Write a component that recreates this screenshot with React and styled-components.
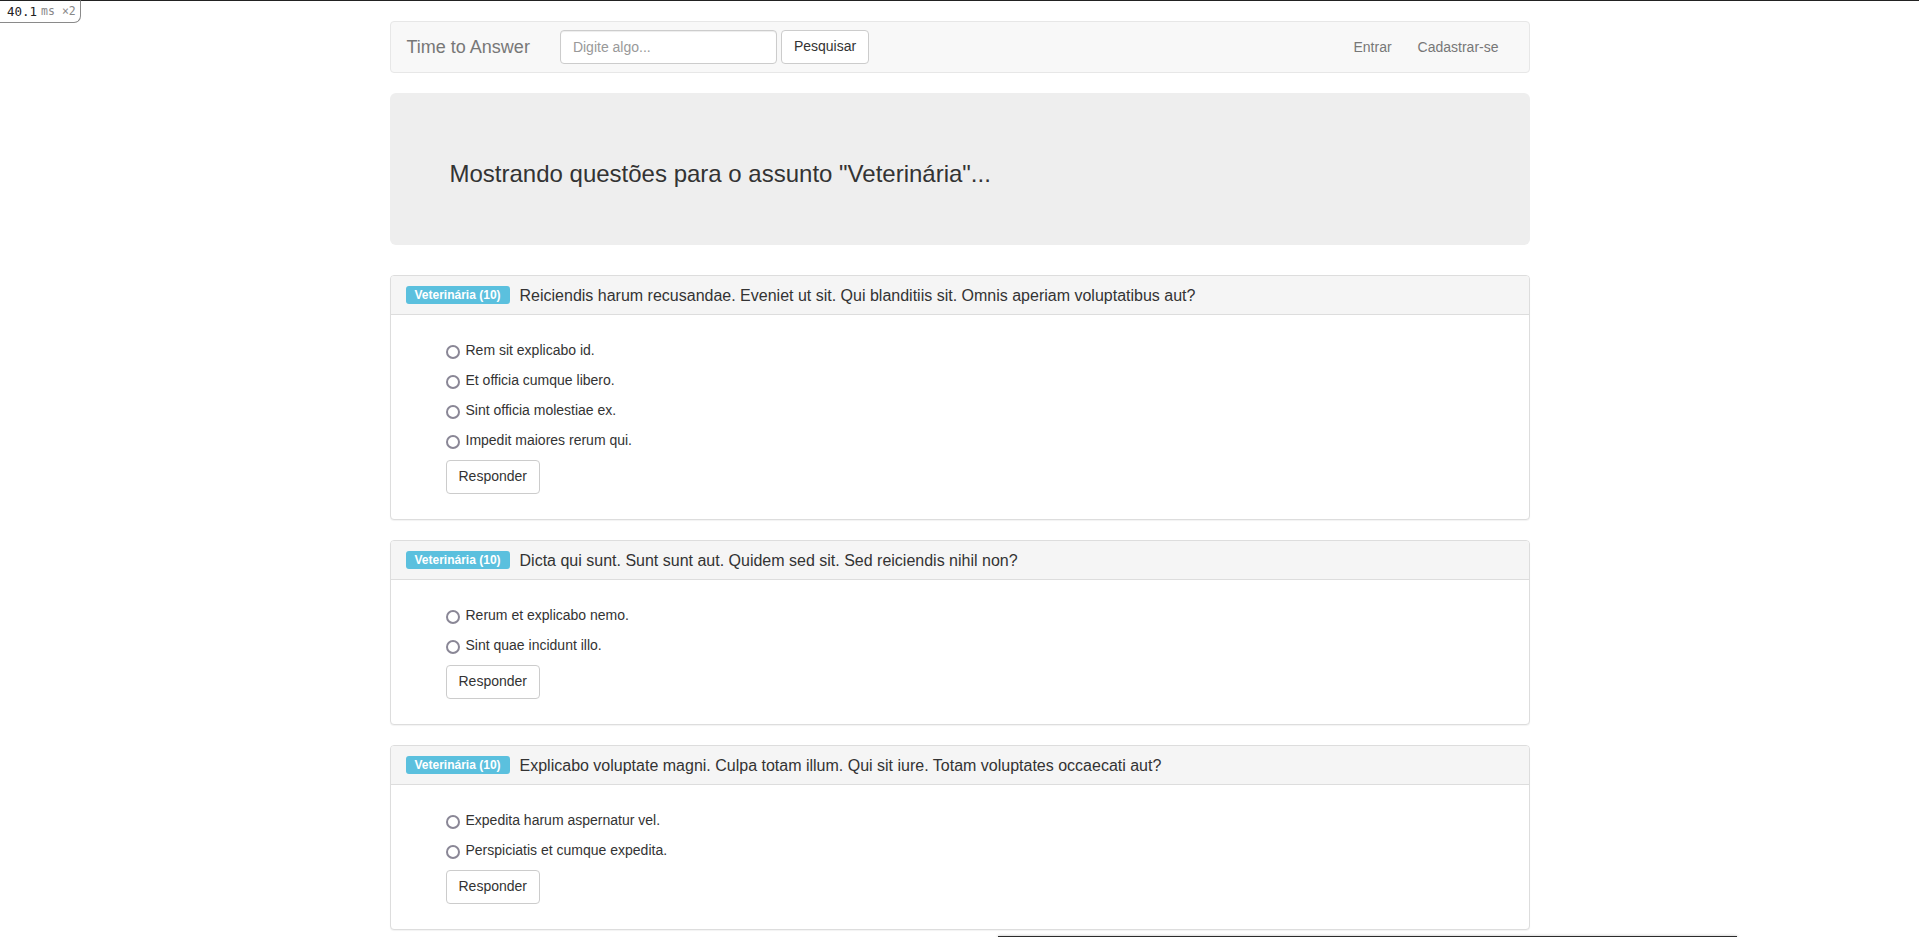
import styled, { createGlobalStyle } from "styled-components";

const GlobalStyle = createGlobalStyle`
  html, body {
    margin: 0;
    padding: 0;
    overflow: hidden;
    background: #fff;
  }
  body {
    font-family: "Liberation Sans", Arial, sans-serif;
    font-size: 14px;
    line-height: 1.42857;
    color: #333;
  }
  * {
    box-sizing: border-box;
  }
`;

const TopLine = styled.div`
  position: fixed;
  top: 0;
  left: 0;
  right: 0;
  height: 1px;
  background: #222;
  z-index: 10;
`;

const TimerBadge = styled.div`
  position: fixed;
  top: 0;
  left: -1px;
  width: 82px;
  height: 23px;
  padding: 0 0 0 7px;
  display: flex;
  align-items: center;
  gap: 4px;
  background: #fff;
  border: 1px solid #8a8a8a;
  border-top-color: #222;
  border-radius: 0 0 7px 0;
  font-family: "DejaVu Sans Mono", "Liberation Mono", monospace;
  font-size: 11.5px;
  color: #888;
  z-index: 11;
`;

const TimerValue = styled.span`
  color: #222;
  font-size: 12.5px;
`;

const BottomBar = styled.div`
  position: fixed;
  left: 998px;
  bottom: -40px;
  width: 739px;
  height: 41px;
  background: #2b2b2b;
  box-shadow: 0 0 3px rgba(0, 0, 0, 0.25);
`;

const Container = styled.div`
  width: 1140px;
  margin: 21px auto 0;
`;

const Navbar = styled.nav`
  display: flex;
  align-items: center;
  height: 52px;
  margin-bottom: 20px;
  background: #f8f8f8;
  border: 1px solid #e7e7e7;
  border-radius: 4px;
`;

const Brand = styled.a`
  padding: 0 15px 0 16px;
  font-size: 18px;
  line-height: 20px;
  color: #777;
  text-decoration: none;
`;

const SearchForm = styled.form`
  display: flex;
  align-items: center;
  gap: 4px;
  padding: 0 15px;
`;

const SearchInput = styled.input`
  width: 217px;
  height: 34px;
  padding: 6px 12px;
  font-family: inherit;
  font-size: 14px;
  color: #555;
  background: #fff;
  border: 1px solid #ccc;
  border-radius: 4px;
  box-shadow: inset 0 1px 1px rgba(0, 0, 0, 0.075);
  outline: none;

  &::placeholder {
    color: #999;
  }
`;

const Button = styled.button`
  height: 34px;
  padding: 6px 12px;
  font-family: inherit;
  font-size: 14px;
  line-height: 1.42857;
  color: #333;
  background: #fff;
  border: 1px solid #ccc;
  border-radius: 4px;
  cursor: pointer;
`;

const NavLinks = styled.ul`
  display: flex;
  margin: 0 0 0 auto;
  padding: 0 15px 0 0;
  list-style: none;
`;

const NavLink = styled.a`
  display: block;
  padding: 15px;
  padding-right: ${(props) => (props.$tight ? "11px" : "15px")};
  line-height: 20px;
  color: #777;
  text-decoration: none;
`;

const Jumbotron = styled.div`
  padding: 48px 60px;
  margin-bottom: 30px;
  background: #eee;
  border-radius: 6px;
`;

const JumboTitle = styled.h3`
  margin: 20px 0 10px;
  font-size: 24px;
  font-weight: 500;
  line-height: 1.1;
`;

const Panel = styled.div`
  margin-bottom: 20px;
  background: #fff;
  border: 1px solid #ddd;
  border-radius: 4px;
  box-shadow: 0 1px 1px rgba(0, 0, 0, 0.05);
`;

const PanelHeading = styled.div`
  display: flex;
  align-items: center;
  gap: 10px;
  padding: 10px 15px;
  background: #f5f5f5;
  border-bottom: 1px solid #ddd;
  border-radius: 3px 3px 0 0;
`;

const Label = styled.span`
  display: inline-block;
  padding: 2.4px 9px 3.6px;
  font-size: 12px;
  font-weight: 700;
  line-height: 1;
  color: #fff;
  background: #5bc0de;
  border-radius: 3px;
  white-space: nowrap;
`;

const PanelTitle = styled.h3`
  margin: 0;
  font-size: 16px;
  font-weight: 500;
  line-height: 1.1;
  color: #333;
`;

const PanelBody = styled.div`
  padding: 15px 15px 25px 55px;
`;

const OptionList = styled.ul`
  display: flex;
  flex-direction: column;
  gap: 10px;
  margin: 10px 0;
  padding: 0;
  list-style: none;
`;

const OptionLabel = styled.label`
  display: flex;
  align-items: flex-start;
  min-height: 20px;
  line-height: 20px;
  cursor: pointer;
`;

const Radio = styled.input`
  appearance: none;
  width: 14px;
  height: 14px;
  margin: 5px 6px 0 0;
  flex: none;
  background: #fff;
  border: 2px solid #8a8796;
  border-radius: 50%;

  &:checked {
    background: radial-gradient(circle, #337ab7 0 3px, #fff 3.5px);
  }
`;

const questions = [
  {
    title:
      "Reiciendis harum recusandae. Eveniet ut sit. Qui blanditiis sit. Omnis aperiam voluptatibus aut?",
    options: [
      "Rem sit explicabo id.",
      "Et officia cumque libero.",
      "Sint officia molestiae ex.",
      "Impedit maiores rerum qui.",
    ],
  },
  {
    title: "Dicta qui sunt. Sunt sunt aut. Quidem sed sit. Sed reiciendis nihil non?",
    options: ["Rerum et explicabo nemo.", "Sint quae incidunt illo."],
  },
  {
    title:
      "Explicabo voluptate magni. Culpa totam illum. Qui sit iure. Totam voluptates occaecati aut?",
    options: ["Expedita harum aspernatur vel.", "Perspiciatis et cumque expedita."],
  },
];

const QuestionPanel = ({ question, index }) => (
  <Panel>
    <PanelHeading>
      <Label>Veterinária (10)</Label>
      <PanelTitle>{question.title}</PanelTitle>
    </PanelHeading>
    <PanelBody>
      <form onSubmit={(e) => e.preventDefault()}>
        <OptionList>
          {question.options.map((opt) => (
            <li key={opt}>
              <OptionLabel>
                <Radio type="radio" name={`q${index}`} />
                {opt}
              </OptionLabel>
            </li>
          ))}
        </OptionList>
        <Button type="submit">Responder</Button>
      </form>
    </PanelBody>
  </Panel>
);

const App = () => (
  <>
    <GlobalStyle />
    <TopLine />
    <TimerBadge>
      <TimerValue>40.1</TimerValue>
      <span>ms ×2</span>
    </TimerBadge>
    <Container>
      <Navbar>
        <Brand href="#">Time to Answer</Brand>
        <SearchForm onSubmit={(e) => e.preventDefault()}>
          <SearchInput placeholder="Digite algo..." />
          <Button type="submit">Pesquisar</Button>
        </SearchForm>
        <NavLinks>
          <li>
            <NavLink href="#" $tight>
              Entrar
            </NavLink>
          </li>
          <li>
            <NavLink href="#">Cadastrar-se</NavLink>
          </li>
        </NavLinks>
      </Navbar>
      <Jumbotron>
        <JumboTitle>Mostrando questões para o assunto "Veterinária"...</JumboTitle>
      </Jumbotron>
      {questions.map((q, i) => (
        <QuestionPanel key={i} question={q} index={i} />
      ))}
    </Container>
    <BottomBar />
  </>
);

export default App;
